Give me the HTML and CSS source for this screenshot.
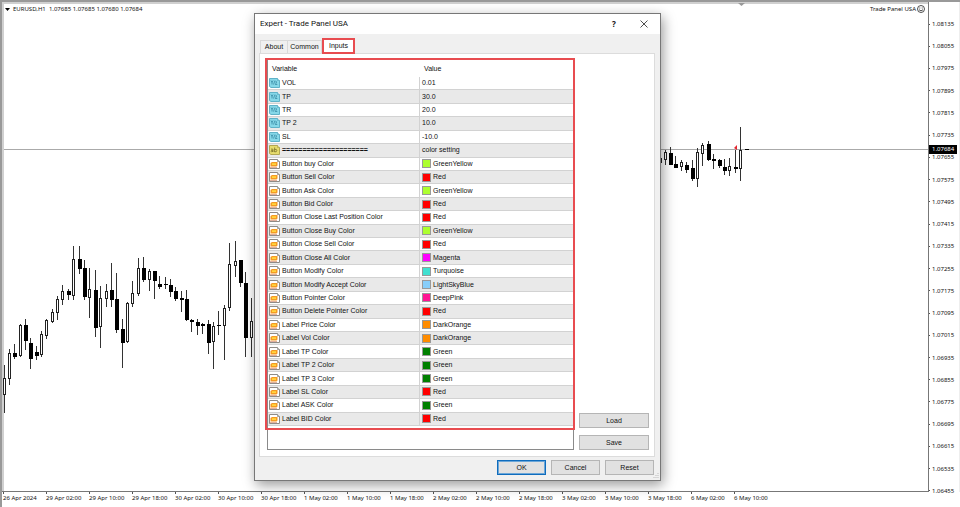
FILE: index.html
```html
<!DOCTYPE html>
<html lang="en">
<head>
<meta charset="utf-8">
<title>Expert - Trade Panel USA</title>
<link rel="stylesheet" href="styles.css">
</head>
<body>
<svg class="defs" aria-hidden="true">
  <symbol id="icon-number" viewBox="0 0 11 10">
    <path d="M.5.5H8.500L10.500 2.500V9.500H2L.5 8.500Z" fill="#86d8e8" stroke="#5fb2c8"/>
    <path d="M8.500.5V2.500h2" fill="#d5f3f9" stroke="#4fa5bd" stroke-width=".7"/>
    <path d="M2 2.500l1 2 1-2M3 4.500V6.500M6 2.500L4.500 6.500M6.300 4q1.700-1 1.200.5L6.300 6.500h2" fill="none" stroke="#2c7f9c" stroke-width=".7"/>
  </symbol>
  <symbol id="icon-text" viewBox="0 0 11 10">
    <path d="M.5.5H8.500L10.500 2.500V9.500H2L.5 8.500Z" fill="#e6dc6c" stroke="#b3a750"/>
    <path d="M8.500.5V2.500h2" fill="#fbf7c4" stroke="#a79b42" stroke-width=".7"/>
    <path d="M2 4.200q2-.8 2 .6V7M4 5.300q-2-.2-2 .9t2 .2M5.600 2.500V7M5.600 4.500q2.200-.8 2.200 1t-2.200 1.300" fill="none" stroke="#6e6420" stroke-width=".7"/>
  </symbol>
  <symbol id="icon-color" viewBox="0 0 11 10">
    <path d="M.5.5H8.500L10.500 2.500V9.500H.5Z" fill="#fff" stroke="#8f8b86"/>
    <path d="M8.500.5V2.500h2" fill="#ddd" stroke="#85817c" stroke-width=".7"/>
    <path d="M1.500 4L3 3H8.500V6.500L7.500 7.500H1.500Z" fill="#f59a23"/>
    <path d="M3 4.200h4v1.800H3z" fill="#ffd53d"/>
    <path d="M1 8.500h7" stroke="#d99a84" stroke-width=".8"/>
  </symbol>
</svg>
<main class="terminal">
  <section class="chart" aria-label="EURUSD,H1">
    <svg class="candles" id="candles" aria-hidden="true"></svg>
    <header class="chart-head">
      <p class="symbol"><svg class="caret" viewBox="0 0 5 3"><path d="M0 0h5L2.500 3z"/></svg>EURUSD,H1&nbsp; 1.07685 1.07685 1.07680 1.07684</p>
      <p class="expert">Trade Panel USA
        <svg class="smile" viewBox="0 0 8 8"><circle cx="4" cy="4" r="3.500" fill="none" stroke="#222" stroke-width=".8"/><path d="M2.800 2.500v1M5.200 2.500v1M2 4.700q2 2.300 4 0" fill="none" stroke="#222" stroke-width=".8"/></svg>
      </p>
    </header>
  </section>
  <aside class="prices"><ol class="price-list" id="prices"></ol><strong class="current">1.07684</strong></aside>
  <ol class="times" id="times"></ol>
</main>

<section class="dialog" role="dialog" aria-labelledby="dialog-title">
  <header class="titlebar">
    <h1 class="title" id="dialog-title">Expert - Trade Panel USA</h1>
    <button class="tool" type="button">?</button>
    <button class="tool" type="button" aria-label="Close"><svg class="close" viewBox="0 0 8 8"><path d="M.5.5l7 7M7.500.5l-7 7" stroke="#222" stroke-width=".8"/></svg></button>
  </header>
  <nav class="tabs" role="tablist">
    <button class="tab" type="button" role="tab">About</button>
    <button class="tab" type="button" role="tab">Common</button>
    <button class="tab tab-active" type="button" role="tab" aria-selected="true">Inputs</button>
  </nav>
  <div class="panel">
    <div class="list">
      <table class="inputs">
        <thead><tr><th>Variable</th><th>Value</th></tr></thead>
        <tbody id="rows"></tbody>
      </table>
      <div class="highlight"></div>
    </div>
    <div class="side">
      <button class="btn" type="button">Load</button>
      <button class="btn" type="button">Save</button>
    </div>
  </div>
  <footer class="actions">
    <button class="btn btn-default" type="button">OK</button>
    <button class="btn" type="button">Cancel</button>
    <button class="btn" type="button">Reset</button>
  </footer>
  <svg class="grip" viewBox="0 0 6 6"><path d="M5 0v6M3 2v4M1 4v2" stroke="#bbb" stroke-dasharray="1 1"/></svg>
</section>
<script src="app.js"></script>
</body>
</html>
```
FILE: styles.css
```css
* { box-sizing: border-box; }
body {
  margin: 0;
  background: #f8f8f8;
  color: #111;
  font: 7px/10px "Liberation Sans", Arial, sans-serif;
}
button { font: inherit; color: inherit; padding: 0; margin: 0; }
p, h1, ol { margin: 0; padding: 0; list-style: none; font-weight: normal; }
.defs { position: absolute; width: 0; height: 0; }

.terminal {
  display: grid;
  grid-template-columns: 1fr 31px;
  grid-template-rows: 1fr 15px;
  height: 100vh;
  border-top: 2px solid #999;
  border-left: 2px solid #999;
  background: #fff;
  font-family: "Noto Sans", sans-serif;
  font-size: 6px;
}
.chart {
  position: relative;
  border: solid #777;
  border-width: 0 1px 1px 0;
  box-shadow: inset 2px 2px 0 #d0d0d0;
  overflow: hidden;
}
.candles { position: absolute; inset: -2px 0 0 -2px; width: 100%; height: 100%; overflow: visible; }
.chart-head { position: relative; display: flex; justify-content: space-between; padding: 2px 3px; }
.symbol, .expert { display: flex; align-items: center; }
.symbol { gap: 3px; }
.expert { gap: 1px; }
.caret { width: 5px; height: 3px; }
.smile { width: 8px; height: 8px; }
.prices { position: relative; border-right: 1px solid #eee; }
.price-list { display: flex; flex-direction: column; justify-content: space-between; height: calc(100% + 4px); padding-top: 17px; }
.price-list li { display: flex; align-items: center; gap: 2px; }
.price-list li::before { content: ""; width: 1px; height: 1px; background: #555; }
.current {
  position: absolute;
  top: 143px;
  left: 0;
  width: 28px;
  padding-left: 3px;
  line-height: 9px;
  background: #000;
  color: #fff;
  font-weight: normal;
}
.times { display: flex; grid-column: 1 / -1; padding-left: 1px; overflow: hidden; }
.times li { position: relative; flex: 0 0 43px; white-space: nowrap; padding-top: 1px; }
.times li::before { content: ""; position: absolute; top: 0; left: 0; width: 1px; height: 2px; background: #555; }

.wick { stroke: #333; fill: none; }
.guide { stroke: #aaa; }
.hollow { fill: #fff; stroke: #222; }
.solid { fill: #000; }
.signal { fill: #e3252f; }
.shift { fill: #999; }

.dialog {
  position: absolute;
  top: 13px;
  left: 254px;
  width: 407px;
  border: 1px solid #777;
  background: #f0f0f0;
  box-shadow: 2px 4px 12px rgba(0, 0, 0, .4);
}
.titlebar { display: flex; align-items: center; height: 20px; padding: 0 1px 0 5px; background: #fff; }
.title { flex: 1; font-family: Roboto, sans-serif; font-size: 8px; }
.tool { width: 30px; height: 20px; border: 0; background: none; font: bold 8px/20px "Noto Sans", sans-serif; }
.close { display: block; width: 8px; height: 8px; margin: 0 auto; }
.tabs { display: flex; align-items: flex-end; height: 19px; padding-left: 5px; }
.tab { height: 13px; width: 28px; border: 1px solid #d9d9d9; border-bottom: 0; background: #f0f0f0; }
.tab:nth-child(2) { width: 34px; border-left: 0; }
.tab-active { position: relative; width: 33px; height: 16px; border: 2px solid #e84c50; background: #fff; margin-bottom: -1px; }
.panel {
  display: flex;
  gap: 5px;
  margin: 0 5px 0 4px;
  padding: 5px 5px 6px 7px;
  border: 1px solid #dcdcdc;
  background: #fff;
}
.list { position: relative; flex: 1; height: 391px; border: 1px solid #8a8a8a; }
.highlight { position: absolute; inset: -2px -2px 19px -3px; border: 2px solid #e84c50; }
.inputs, .inputs thead { display: block; }
.inputs tbody { display: grid; grid-template-rows: repeat(26, 1fr); height: 349px; }
.inputs tr { display: grid; grid-template-columns: 152px 1fr; }
.inputs th { padding: 4px 4px 3px; text-align: left; font-weight: normal; }
.inputs td { display: flex; align-items: center; gap: 2px; padding: 0 2px; border-bottom: 1px solid #d2d2d2; min-height: 0; }
.inputs td:first-child { padding-left: 1px; border-right: 1px solid #d2d2d2; }
.inputs tbody tr:nth-child(even) { background: #e9e9e9; }
.divider { font-weight: bold; }
.icon { width: 11px; height: 10px; }
.swatch { width: 9px; height: 9px; border: 1px solid #999; }
.side { display: flex; flex-direction: column; justify-content: flex-end; gap: 7px; width: 70px; }
.btn { height: 15px; border: 1px solid #b5b5b5; background: #e1e1e1; }
.actions { display: flex; justify-content: flex-end; gap: 5px; padding: 3px 6px 5px; }
.actions .btn { width: 49px; }
.btn.btn-default { border: 1px solid #0f6cbd; box-shadow: inset 0 0 0 1px #6ba6d8; }
.grip { position: absolute; right: 1px; bottom: 1px; width: 6px; height: 6px; }
```
FILE: app.js
```js
// Each candle: centre x, high, low, body top, body bottom, 1 when the body is solid.
const candles = [
  [4,365,413,378,395,0],[9,349,385,353,379,0],[14,344,359,353,357,1],[20,324,357,325,356,0],
  [25,319,350,325,341,1],[30,338,369,343,359,1],[36,346,360,352,356,1],[41,331,357,334,355,0],
  [46,319,339,320,336,0],[52,309,323,312,322,0],[57,296,320,299,313,0],[62,285,305,291,300,0],
  [68,289,300,291,295,1],[73,246,300,259,296,0],[79,246,274,259,269,1],[84,260,300,268,297,1],
  [89,268,318,289,298,0],[95,270,337,290,328,1],[100,286,348,298,327,0],[106,284,307,291,299,0],
  [111,263,307,290,300,1],[116,273,333,299,330,1],[122,319,368,329,343,1],[127,302,343,303,342,0],
  [132,281,307,293,304,0],[138,258,296,268,294,0],[143,257,282,268,280,1],[149,269,291,271,280,0],
  [154,271,299,271,281,1],[159,276,289,284,287,1],[165,277,289,284,285,1],[170,279,297,285,292,1],
  [175,287,301,291,299,1],[181,291,312,298,300,1],[186,290,321,299,320,1],[191,319,332,320,322,1],
  [197,319,335,322,326,1],[202,323,334,324,326,1],[208,320,354,324,343,1],[213,322,369,326,342,0],
  [218,311,335,325,326,1],[224,305,360,308,326,0],[229,243,311,264,308,0],[235,241,277,261,266,0],
  [240,260,287,260,283,1],[245,272,357,283,338,1],[251,298,357,321,338,0],
  [660,158,163,158,163,0],[665,150,165,152,160,0],[670,147,165,153,165,1],[675,156,168,164,168,1],
  [681,160,171,162,167,0],[686,162,173,165,170,1],[692,160,181,168,179,1],[697,148,187,152,179,0],
  [702,143,166,145,154,0],[708,141,161,144,160,1],[713,154,169,159,161,1],[719,159,168,160,166,1],
  [724,159,175,167,171,1],[729,158,176,166,171,0],[735,150,173,167,169,1],[740,127,181,150,169,0],
  [746,149,150,149,150,1]
];
let art = '<path class="guide" d="M4 149.500H2000"/>';
for (const [x, high, low, top, bottom, solid] of candles) {
  art += `<path class="wick" d="M${x + .5} ${high}V${low}"/>`;
  art += solid
    ? `<rect class="solid" x="${x - 1}" y="${top}" width="4" height="${bottom - top}"/>`
    : `<rect class="hollow" x="${x - .5}" y="${top + .5}" width="2" height="${bottom - top - 1}"/>`;
}
art += '<path class="signal" d="M734 148l3-3v5z"/><path class="shift" d="M738 3h7l-3.500 3z"/>';
document.getElementById('candles').innerHTML = art;

let prices = '';
for (let p = 108135; p >= 106455; p -= 80) prices += `<li>${(p / 100000).toFixed(5)}</li>`;
document.getElementById('prices').innerHTML = prices;

const times = ['26 Apr 2024', '29 Apr 02:00', '29 Apr 10:00', '29 Apr 18:00', '30 Apr 02:00', '30 Apr 10:00',
  '30 Apr 18:00', '1 May 02:00', '1 May 10:00', '1 May 18:00', '2 May 02:00', '2 May 10:00', '2 May 18:00',
  '3 May 02:00', '3 May 10:00', '3 May 18:00', '6 May 02:00', '6 May 10:00'];
document.getElementById('times').innerHTML = times.map(t => `<li>${t}</li>`).join('');

const rows = [
  ['number', 'VOL', '0.01'], ['number', 'TP', '30.0'], ['number', 'TR', '20.0'], ['number', 'TP 2', '10.0'],
  ['number', 'SL', '-10.0'], ['text', '=====================', 'color setting'],
  ['color', 'Button buy Color', 'GreenYellow'], ['color', 'Button Sell Color', 'Red'],
  ['color', 'Button Ask Color', 'GreenYellow'], ['color', 'Button Bid Color', 'Red'],
  ['color', 'Button Close Last Position Color', 'Red'], ['color', 'Button Close Buy Color', 'GreenYellow'],
  ['color', 'Button Close Sell Color', 'Red'], ['color', 'Button Close All Color', 'Magenta'],
  ['color', 'Button Modify Color', 'Turquoise'], ['color', 'Button Modify Accept Color', 'LightSkyBlue'],
  ['color', 'Button Pointer Color', 'DeepPink'], ['color', 'Button Delete Pointer Color', 'Red'],
  ['color', 'Label Price Color', 'DarkOrange'], ['color', 'Label Vol Color', 'DarkOrange'],
  ['color', 'Label TP Color', 'Green'], ['color', 'Label TP 2 Color', 'Green'],
  ['color', 'Label TP 3 Color', 'Green'], ['color', 'Label SL Color', 'Red'],
  ['color', 'Label ASK Color', 'Green'], ['color', 'Label BID Color', 'Red']
];
document.getElementById('rows').innerHTML = rows.map(([kind, name, value]) => {
  const swatch = kind === 'color' ? `<span class="swatch" style="background:${value}"></span>` : '';
  const label = kind === 'text' ? `<span class="divider">${name}</span>` : name;
  return `<tr><td><svg class="icon"><use href="#icon-${kind}"/></svg>${label}</td><td>${swatch}${value}</td></tr>`;
}).join('');
```
